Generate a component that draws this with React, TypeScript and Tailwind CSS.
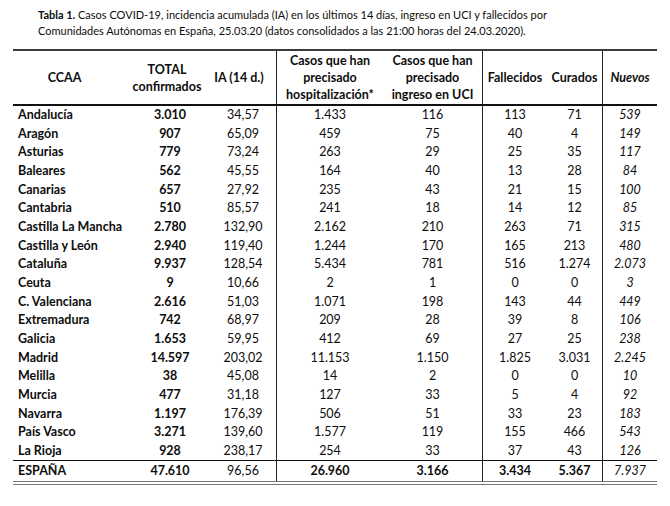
import React from 'react';

type Row = [string, string, string, string, string, string, string, string];

const rows: Row[] = [
  ['Andalucía', '3.010', '34,57', '1.433', '116', '113', '71', '539'],
  ['Aragón', '907', '65,09', '459', '75', '40', '4', '149'],
  ['Asturias', '779', '73,24', '263', '29', '25', '35', '117'],
  ['Baleares', '562', '45,55', '164', '40', '13', '28', '84'],
  ['Canarias', '657', '27,92', '235', '43', '21', '15', '100'],
  ['Cantabria', '510', '85,57', '241', '18', '14', '12', '85'],
  ['Castilla La Mancha', '2.780', '132,90', '2.162', '210', '263', '71', '315'],
  ['Castilla y León', '2.940', '119,40', '1.244', '170', '165', '213', '480'],
  ['Cataluña', '9.937', '128,54', '5.434', '781', '516', '1.274', '2.073'],
  ['Ceuta', '9', '10,66', '2', '1', '0', '0', '3'],
  ['C. Valenciana', '2.616', '51,03', '1.071', '198', '143', '44', '449'],
  ['Extremadura', '742', '68,97', '209', '28', '39', '8', '106'],
  ['Galicia', '1.653', '59,95', '412', '69', '27', '25', '238'],
  ['Madrid', '14.597', '203,02', '11.153', '1.150', '1.825', '3.031', '2.245'],
  ['Melilla', '38', '45,08', '14', '2', '0', '0', '10'],
  ['Murcia', '477', '31,18', '127', '33', '5', '4', '92'],
  ['Navarra', '1.197', '176,39', '506', '51', '33', '23', '183'],
  ['País Vasco', '3.271', '139,60', '1.577', '119', '155', '466', '543'],
  ['La Rioja', '928', '238,17', '254', '33', '37', '43', '126'],
];

const total: Row = ['ESPAÑA', '47.610', '96,56', '26.960', '3.166', '3.434', '5.367', '7.937'];

const cols = 'grid grid-cols-[117px_80px_67px_106px_100px_64px_56px_54px]';

function DataRow({ r }: { r: Row }) {
  return (
    <div className={`${cols} h-[18.67px] items-center`}>
      <div className="pl-[5px] font-bold whitespace-nowrap">{r[0]}</div>
      <div className="text-center font-bold">{r[1]}</div>
      <div className="text-center h-full flex items-center justify-center border-r border-[#222]">{r[2]}</div>
      <div className="text-center">{r[3]}</div>
      <div className="text-center h-full flex items-center justify-center border-r border-[#222]">{r[4]}</div>
      <div className="text-center">{r[5]}</div>
      <div className="text-center h-full flex items-center justify-center border-r border-[#222]">{r[6]}</div>
      <div className="text-center italic">{r[7]}</div>
    </div>
  );
}

export default function App() {
  return (
    <div
      className="w-[670px] h-[506px] bg-white text-[#0d0d0d] overflow-hidden"
      style={{ fontFamily: 'Lato, "Open Sans", sans-serif' }}
    >
      {/* Caption */}
      <div className="pl-[38px] pt-[7px] text-[11px] leading-[15.5px]">
        <p>
          <span className="font-bold">Tabla 1.</span> Casos COVID-19, incidencia acumulada (IA) en los últimos 14 días, ingreso en UCI y fallecidos por
        </p>
        <p>Comunidades Autónomas en España, 25.03.20 (datos consolidados a las 21:00 horas del 24.03.2020).</p>
      </div>

      {/* Table */}
      <div className="ml-[13px] mt-[11px] w-[644px] text-[12.5px]">
        <div className={`${cols} h-[57px] border-t-2 border-b-2 border-t-[#3a3a3a] border-b-[#111] font-bold leading-[17px]`}>
          <div className="flex items-center justify-center pr-[14px]">CCAA</div>
          <div className="flex items-center justify-center text-center pr-[6px]">TOTAL<br />confirmados</div>
          <div className="flex items-center justify-center border-r border-[#222] pr-[8px]">IA (14 d.)</div>
          <div className="flex items-center justify-center text-center">Casos que han<br />precisado<br />hospitalización*</div>
          <div className="flex items-center justify-center text-center border-r border-[#222]">Casos que han<br />precisado<br />ingreso en UCI</div>
          <div className="flex items-center justify-center">Fallecidos</div>
          <div className="flex items-center justify-center border-r border-[#222]">Curados</div>
          <div className="flex items-center justify-center italic">Nuevos</div>
        </div>

        {rows.map((r) => (
          <DataRow key={r[0]} r={r} />
        ))}

        <div className="border-t border-[#111] border-b-4 border-double border-b-[#777]">
          <div className={`${cols} h-[20px] items-center`}>
            <div className="pl-[5px] font-bold">{total[0]}</div>
            <div className="text-center font-bold">{total[1]}</div>
            <div className="h-full flex items-center justify-center border-r border-[#222]">{total[2]}</div>
            <div className="text-center font-bold">{total[3]}</div>
            <div className="h-full flex items-center justify-center border-r border-[#222] font-bold">{total[4]}</div>
            <div className="text-center font-bold">{total[5]}</div>
            <div className="h-full flex items-center justify-center border-r border-[#222] font-bold">{total[6]}</div>
            <div className="text-center italic">{total[7]}</div>
          </div>
        </div>
      </div>
    </div>
  );
}
